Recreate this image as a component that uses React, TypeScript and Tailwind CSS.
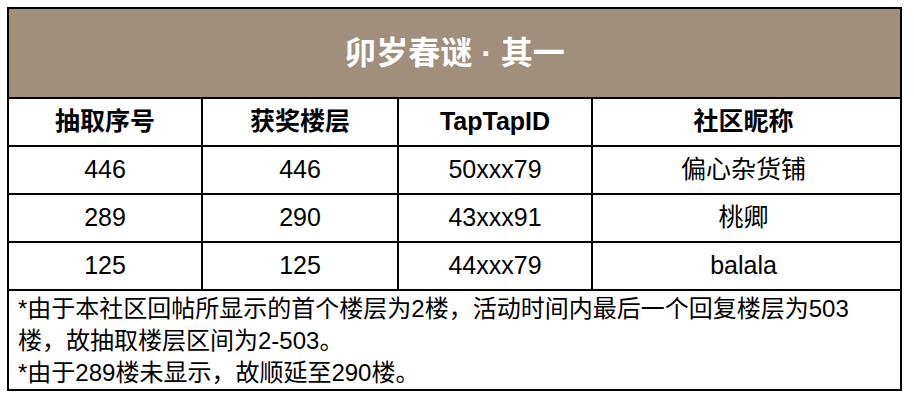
import React from "react";

const font = { fontFamily: '"Liberation Sans", "Noto Sans CJK SC", sans-serif' };

const headers = ["抽取序号", "获奖楼层", "TapTapID", "社区昵称"];
const rows = [
  ["446", "446", "50xxx79", "偏心杂货铺"],
  ["289", "290", "43xxx91", "桃卿"],
  ["125", "125", "44xxx79", "balala"],
];

function Row({ cells, bold }: { cells: string[]; bold?: boolean }) {
  return (
    <div className="grid grid-cols-[194px_196px_194px_301px] h-[48px] border-b-2 border-black">
      {cells.map((c, i) => (
        <div
          key={i}
          className={`flex items-center justify-center text-[25px] text-black ${bold ? "font-bold" : "font-normal"} ${i < 3 ? "border-r-2 border-black" : ""}`}
        >
          {c}
        </div>
      ))}
    </div>
  );
}

export default function App() {
  return (
    <div className="w-[914px] h-[400px] bg-white pt-[7px] pl-[7px]" style={font}>
      <div className="w-[895px] border-2 border-black bg-white">
        <div className="h-[90px] bg-[#a18f7b] border-b-2 border-black flex items-center justify-center">
          <span className="text-white font-bold text-[32px] leading-none">卯岁春谜 · 其一</span>
        </div>
        <Row cells={headers} bold />
        {rows.map((r, i) => (
          <Row key={i} cells={r} />
        ))}
        <div className="h-[98px] pl-[9px] pt-[2px] text-[24px] leading-[32px] text-black">
          <div>*由于本社区回帖所显示的首个楼层为2楼，活动时间内最后一个回复楼层为503</div>
          <div>楼，故抽取楼层区间为2-503。</div>
          <div>*由于289楼未显示，故顺延至290楼。</div>
        </div>
      </div>
    </div>
  );
}
